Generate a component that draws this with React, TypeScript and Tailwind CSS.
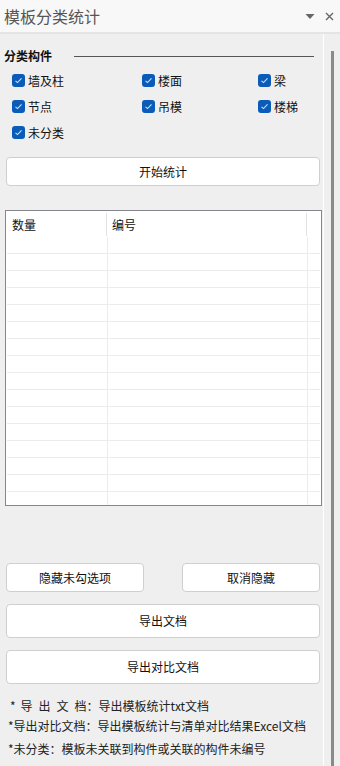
import React from "react";

const font = { fontFamily: '"Noto Sans CJK SC", "Noto Sans", sans-serif' };

function Check({ label }: { label: string }) {
  return (
    <div className="flex items-center gap-[3px]">
      <span className="w-[13px] h-[13px] rounded-[3px] bg-[#0b5cb8] flex items-center justify-center">
        <svg width="9" height="9" viewBox="0 0 9 9">
          <path d="M1.5 4.8 L3.5 6.6 L7.5 2.4" stroke="#cfe1f5" strokeWidth="1.1" fill="none" />
        </svg>
      </span>
      <span className="text-[12px] leading-none text-[#111]">{label}</span>
    </div>
  );
}

function Btn({ children, className }: { children: React.ReactNode; className: string }) {
  return (
    <div
      className={
        "bg-white border border-[#cfcfcf] rounded-[4px] flex items-center justify-center text-[12px] text-[#111] " +
        className
      }
    >
      {children}
    </div>
  );
}

export default function App() {
  const rows = Array.from({ length: 16 });
  return (
    <div className="w-[340px] h-[766px] bg-[#efefef] flex flex-col overflow-hidden" style={font}>
      <div className="h-[32px] bg-[#f8f8f8] flex items-center justify-between pl-[4px] pr-[6px] shrink-0">
        <span className="text-[16px] text-[#555] leading-none">模板分类统计</span>
        <div className="flex items-center gap-[10px]">
          <svg width="10" height="7" viewBox="0 0 10 7">
            <path d="M0.5 1 L9.5 1 L5 6 Z" fill="#666" />
          </svg>
          <svg width="9" height="9" viewBox="0 0 9 9">
            <path d="M1 1 L8 8 M8 1 L1 8" stroke="#666" strokeWidth="1.4" />
          </svg>
        </div>
      </div>
      <div className="h-[2px] bg-[#e4e4e4] shrink-0" />
      <div className="flex flex-1 min-h-0">
        <div className="w-[323px] flex flex-col">
          <div className="flex items-center mt-[16px] pl-[4px] pr-[9px]">
            <span className="text-[12px] font-bold text-[#111] leading-none">分类构件</span>
            <div className="flex-1 h-px bg-[#555] ml-[22px]" />
          </div>
          <div className="grid grid-cols-[130px_116px_1fr] pl-[12px] mt-[12px] gap-y-[13px]">
            <Check label="墙及柱" />
            <Check label="楼面" />
            <Check label="梁" />
            <Check label="节点" />
            <Check label="吊模" />
            <Check label="楼梯" />
            <Check label="未分类" />
          </div>
          <Btn className="mx-[6px] w-[314px] h-[29px] mt-[18px]">开始统计</Btn>
          <div className="ml-[5px] w-[317px] h-[296px] mt-[24px] border border-[#86868f] bg-white p-px overflow-hidden">
            <div className="flex h-[25px]">
              <div className="w-[100px] flex items-center pl-[5px] text-[12px] text-[#111] border-r border-[#e2e2e2] my-px">数量</div>
              <div className="w-[200px] flex items-center pl-[5px] text-[12px] text-[#111] border-r border-[#e2e2e2] my-px">编号</div>
              <div className="flex-1" />
            </div>
            {rows.map((_, i) => (
              <div key={i} className="flex h-[17px] border-b border-[#ececec]">
                <div className="w-[101px] border-r border-[#ececec]" />
                <div className="w-[200px] border-r border-[#ececec]" />
                <div className="flex-1" />
              </div>
            ))}
          </div>
          <div className="flex justify-between ml-[6px] w-[314px] mt-[57px]">
            <Btn className="w-[138px] h-[29px]">隐藏未勾选项</Btn>
            <Btn className="w-[138px] h-[29px]">取消隐藏</Btn>
          </div>
          <Btn className="mx-[6px] w-[314px] h-[34px] mt-[12px]">导出文档</Btn>
          <Btn className="mx-[6px] w-[314px] h-[34px] mt-[12px]">导出对比文档</Btn>
          <div className="mt-[14px] text-[12px] text-[#222] leading-none">
            <div className="flex items-center pl-[10px] h-[16px]">
              <span>*</span>
              <span className="w-[66px] ml-[5px] flex justify-between">
                <span>导</span>
                <span>出</span>
                <span>文</span>
                <span>档</span>
              </span>
              <span>：导出模板统计txt文档</span>
            </div>
            <div className="flex items-center pl-[8px] h-[16px] mt-[4px]">
              <span>*导出对比文档：导出模板统计与清单对比结果Excel文档</span>
            </div>
            <div className="flex items-center pl-[8px] h-[16px] mt-[7px]">
              <span>*未分类：模板未关联到构件或关联的构件未编号</span>
            </div>
          </div>
        </div>
        <div className="w-px bg-white" />
        <div className="flex-1 relative">
          <div className="absolute left-[7px] top-[17px] bottom-0 w-[3px] bg-[#8a8a8a]" />
        </div>
      </div>
    </div>
  );
}
